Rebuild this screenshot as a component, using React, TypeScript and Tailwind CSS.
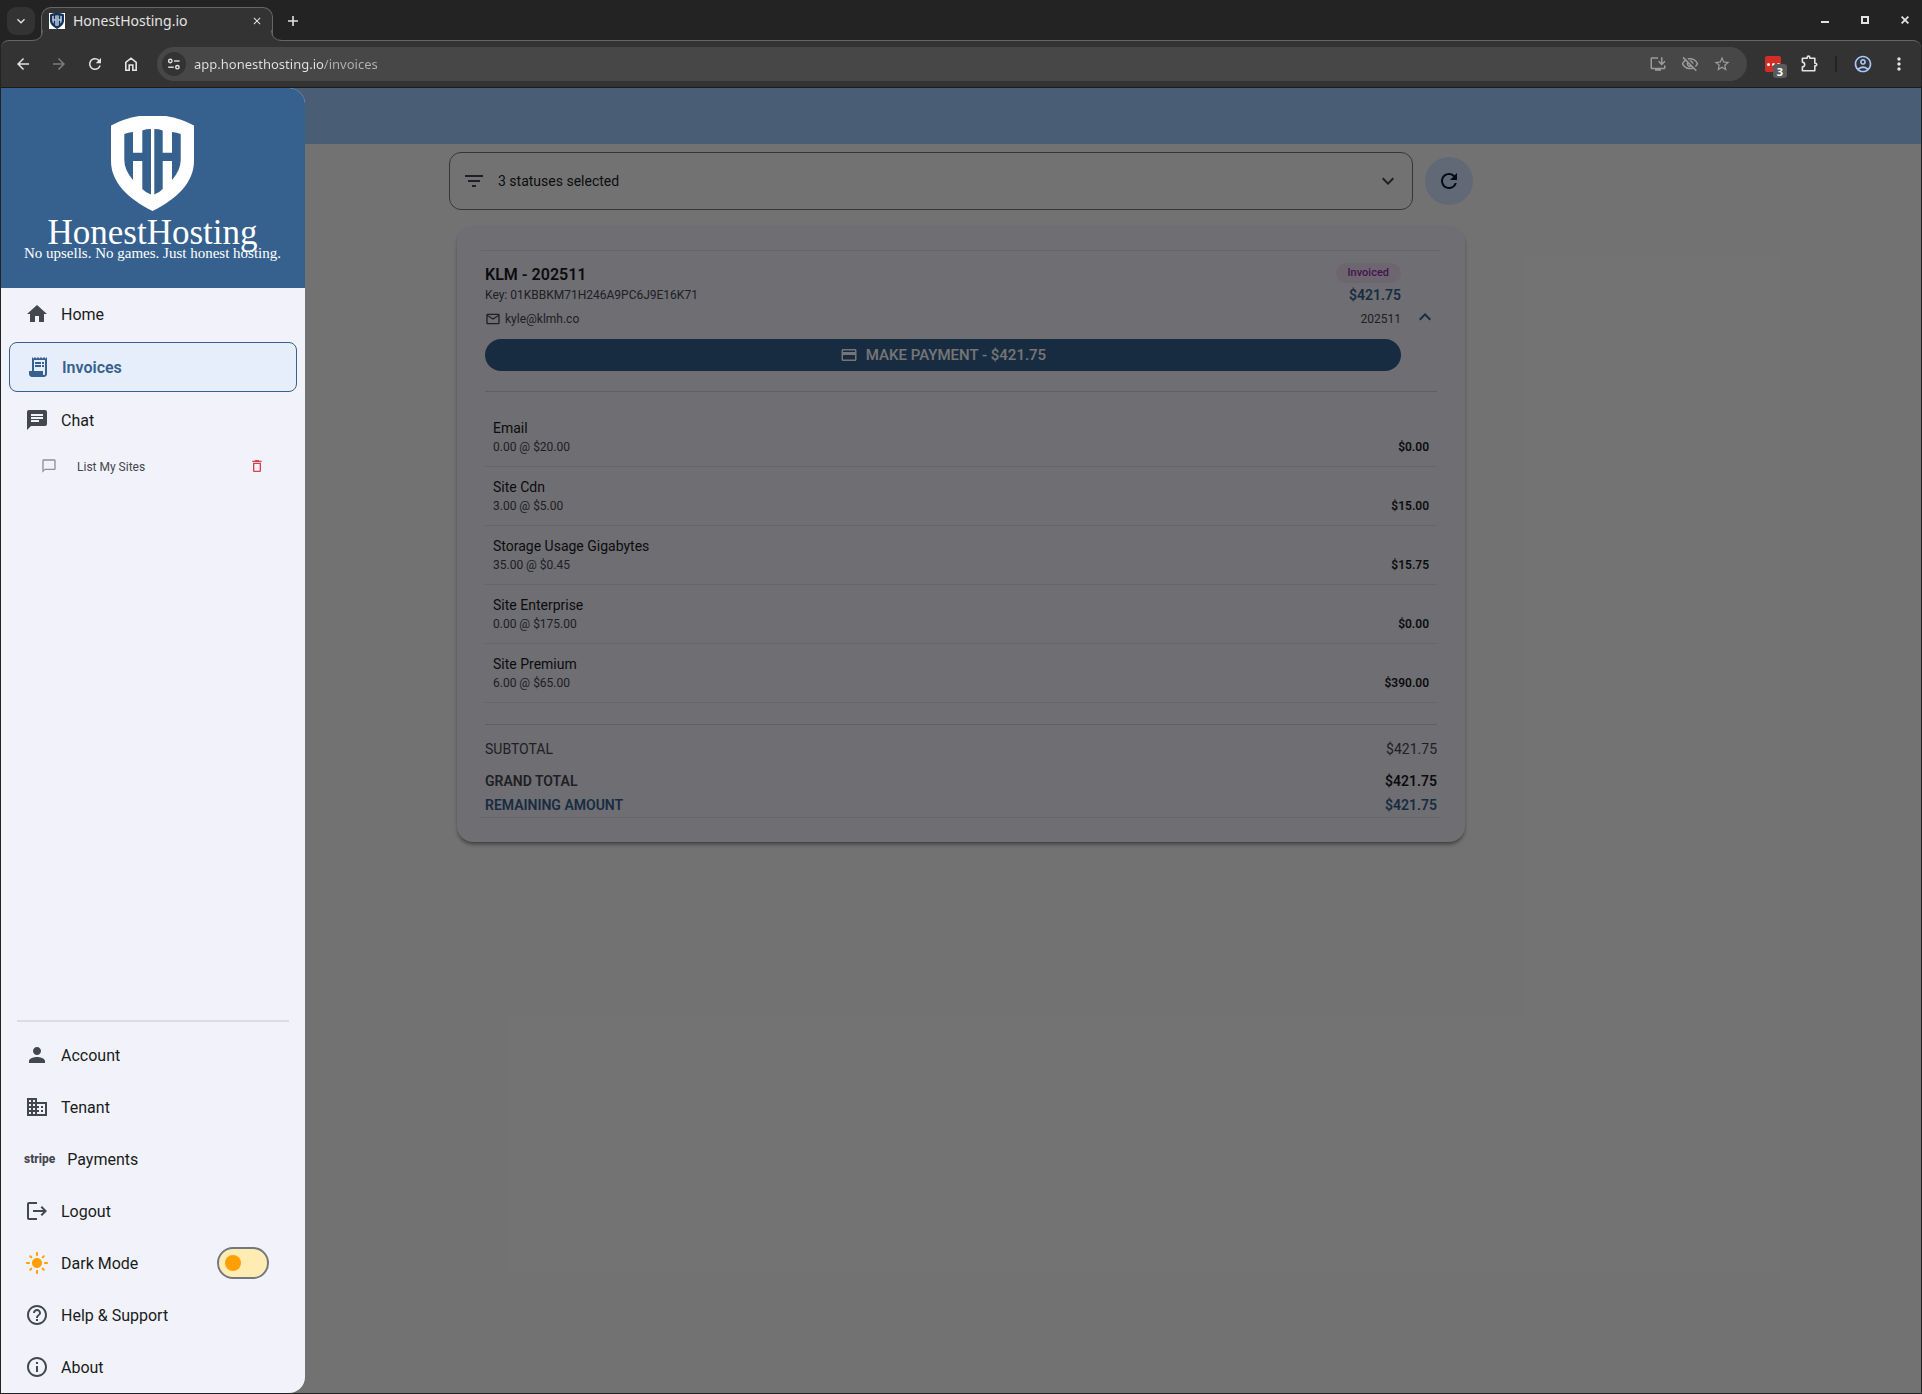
import { useState } from 'react';
import type { ReactNode } from 'react';
import {
  MdArrowBack,
  MdArrowForward,
  MdBusiness,
  MdChat,
  MdChatBubbleOutline,
  MdClose,
  MdCreditCard,
  MdDeleteOutline,
  MdFilterList,
  MdHelpOutline,
  MdHome,
  MdInfoOutline,
  MdKeyboardArrowDown,
  MdKeyboardArrowUp,
  MdLightMode,
  MdLogout,
  MdMailOutline,
  MdMoreVert,
  MdOutlineAccountCircle,
  MdOutlineInstallDesktop,
  MdOutlineVisibilityOff,
  MdPerson,
  MdReceiptLong,
  MdRefresh,
  MdStarBorder,
} from 'react-icons/md';

interface LineItem {
  name: string;
  detail: string;
  amount: string;
}

const lineItems: LineItem[] = [
  { name: 'Email', detail: '0.00 @ $20.00', amount: '$0.00' },
  { name: 'Site Cdn', detail: '3.00 @ $5.00', amount: '$15.00' },
  { name: 'Storage Usage Gigabytes', detail: '35.00 @ $0.45', amount: '$15.75' },
  { name: 'Site Enterprise', detail: '0.00 @ $175.00', amount: '$0.00' },
  { name: 'Site Premium', detail: '6.00 @ $65.00', amount: '$390.00' },
];

function Shield({ className, shield, bars }: { className: string; shield: string; bars: string }) {
  return (
    <svg viewBox="0 0 83 95" className={className} aria-hidden="true">
      <path fill={shield} d="M0 9.5Q13 2.5 28 0H55Q70 2.5 83 9.5V45C83 66 66 83 41.5 95C17 83 0 66 0 45Z" />
      <path
        fill={bars}
        d="M13.3 18Q17 16.3 22 16V36.7H31.3V14.4Q35 13 40 13V78.5Q35 77 31.3 73V45H22V64Q13.3 54 13.3 44Z"
      />
      <path
        fill={bars}
        d="M69.7 18Q66 16.3 61 16V36.7H51.7V14.4Q48 13 43.3 13V78.5Q48 77 51.7 73V45H61V64Q69.7 54 69.7 44Z"
      />
    </svg>
  );
}

function TabStrip() {
  return (
    <div className="flex h-10 bg-[#232323] px-px text-[#e3e3e3]">
      <div className="flex flex-1 pl-1.5 pt-[7px]">
        <button aria-label="Search tabs" className="flex h-7 w-7 items-center justify-center rounded-[9px] bg-[#333333]">
          <MdKeyboardArrowDown className="h-4 w-4" />
        </button>
        <div className="relative z-10 -mb-px ml-1.5 flex w-[232px] items-start rounded-t-[10px] border border-b-0 border-[#666666] bg-[#333333] pl-[7px] pr-[7px] pt-[5px]">
          <svg className="absolute -left-[10px] bottom-0 h-[11px] w-[11px]" viewBox="0 0 11 11" aria-hidden="true">
            <path d="M11 0H10.5Q10.5 10.5 0 10.5V11H11Z" fill="#333333" />
            <path d="M10.5 0Q10.5 10.5 0 10.5" fill="none" stroke="#666666" />
          </svg>
          <svg className="absolute -right-[10px] bottom-0 h-[11px] w-[11px]" viewBox="0 0 11 11" aria-hidden="true">
            <path d="M0 0H.5Q.5 10.5 11 10.5V11H0Z" fill="#333333" />
            <path d="M.5 0Q.5 10.5 11 10.5" fill="none" stroke="#666666" />
          </svg>
          <span className="flex h-4 w-4 items-center justify-center bg-white">
            <Shield className="h-4 w-[14px]" shield="#12335c" bars="#c9d6e6" />
          </span>
          <span className="ml-2 flex-1 font-['Noto_Sans'] text-[14px] leading-4">HonestHosting.io</span>
          <button aria-label="Close tab" className="flex h-4 w-4 items-center justify-center">
            <MdClose className="h-3 w-3" />
          </button>
        </div>
        <button aria-label="New tab" className="ml-1.5 flex h-7 w-7 items-center justify-center">
          <svg viewBox="0 0 12 12" className="h-3 w-3" aria-hidden="true">
            <path d="M6 1v10M1 6h10" stroke="currentColor" strokeWidth="1.6" fill="none" />
          </svg>
        </button>
      </div>
      <div className="flex items-center gap-6 pr-2">
        <button aria-label="Minimize" className="flex h-4 w-4 items-center justify-center pt-1">
          <span className="h-0.5 w-2 bg-[#e3e3e3]" />
        </button>
        <button aria-label="Maximize" className="flex h-4 w-4 items-center justify-center">
          <span className="h-2 w-2 border-2 border-[#e3e3e3]" />
        </button>
        <button aria-label="Close window" className="flex h-4 w-4 items-center justify-center">
          <svg viewBox="0 0 8 8" className="h-2 w-2" aria-hidden="true">
            <path d="M.6.6l6.8 6.8M7.4.6L.6 7.4" stroke="currentColor" strokeWidth="1.8" fill="none" />
          </svg>
        </button>
      </div>
    </div>
  );
}

function Toolbar() {
  const [url, setUrl] = useState('app.honesthosting.io/invoices');

  return (
    <div className="mx-px flex h-12 items-center rounded-t-lg border-b border-t border-b-[#1c1c1c] border-t-[#666666] bg-[#333333] px-3 text-[#e3e3e3]">
      <div className="flex items-center gap-4">
        <button aria-label="Back" className="flex h-5 w-5 items-center justify-center">
          <MdArrowBack className="h-[18px] w-[18px]" />
        </button>
        <button aria-label="Forward" className="flex h-5 w-5 items-center justify-center text-[#7c7c7c]">
          <MdArrowForward className="h-[18px] w-[18px]" />
        </button>
        <button aria-label="Reload" className="flex h-5 w-5 items-center justify-center">
          <MdRefresh className="h-[18px] w-[18px]" />
        </button>
        <button aria-label="Home page" className="flex h-5 w-5 items-center justify-center">
          <svg viewBox="0 0 18 18" className="h-[18px] w-[18px]" fill="none" stroke="currentColor" strokeWidth="1.6" aria-hidden="true">
            <path d="M3.8 15.2V7.4L9 3.2l5.2 4.2v7.8h-3.4V10H7.2v5.2z" />
          </svg>
        </button>
      </div>
      <div className="ml-4 flex h-[34px] flex-1 items-center rounded-full bg-[#474747] pl-[5px] pr-4">
        <button aria-label="Site information" className="flex h-6 w-6 items-center justify-center rounded-full bg-[#333333]">
          <svg viewBox="0 0 14 14" className="h-[14px] w-[14px]" fill="none" stroke="currentColor" strokeWidth="1.4" aria-hidden="true">
            <circle cx="3.3" cy="4" r="1.7" />
            <path d="M7 4h5.6" />
            <circle cx="10.4" cy="10.2" r="1.7" />
            <path d="M1.2 10.2h5.6" />
          </svg>
        </button>
        <input
          aria-label="Address"
          value={url}
          onChange={(e) => setUrl(e.target.value)}
          className="ml-2 flex-1 bg-[linear-gradient(to_right,#e3e3e3_130px,#b2b2b2_130px)] bg-clip-text font-['Noto_Sans'] text-[13px] leading-5 text-transparent caret-white outline-none"
        />
        <div className="flex items-center gap-[14px] text-[#9c9c9c]">
          <button aria-label="Install app">
            <MdOutlineInstallDesktop className="h-[18px] w-[18px]" />
          </button>
          <button aria-label="Tracking protection">
            <MdOutlineVisibilityOff className="h-[18px] w-[18px]" />
          </button>
          <button aria-label="Bookmark this page">
            <MdStarBorder className="h-[18px] w-[18px]" />
          </button>
        </div>
      </div>
      <button aria-label="Password manager" className="relative ml-[18px] h-4 w-4 rounded-[2px] bg-[#d32d27]">
        <span className="flex items-center gap-0.5 pl-0.5">
          <span className="h-[3px] w-[3px] rounded-full bg-white" />
          <span className="h-[3px] w-[3px] rounded-full bg-white" />
          <span className="h-[3px] w-[3px] rounded-full bg-white" />
        </span>
        <span className="absolute left-2 top-2 flex h-[14px] w-[14px] items-center justify-center rounded-[3px] bg-[#5a5a5a] font-['Noto_Sans'] text-[11px] font-bold leading-none text-white">
          3
        </span>
      </button>
      <button aria-label="Extensions" className="ml-[18px]">
        <svg viewBox="0 0 20 20" className="h-5 w-5" fill="none" stroke="currentColor" strokeWidth="1.6" strokeLinejoin="round" aria-hidden="true">
          <path d="M3.4 4.2h4.8V3.4a1.3 1.3 0 0 1 2.6 0v.8h5v5h.6a1.3 1.3 0 0 1 0 2.6h-.6v5H3.4v-3.9a2.3 2.3 0 0 0 0-4.6z" />
        </svg>
      </button>
      <span className="ml-[16px] h-4 w-0.5 bg-[#232323]" />
      <button aria-label="Profile" className="ml-4 text-[#a8c7fa]">
        <MdOutlineAccountCircle className="h-5 w-5" />
      </button>
      <button aria-label="Browser menu" className="ml-4">
        <MdMoreVert className="h-5 w-5" />
      </button>
    </div>
  );
}

function NavItem({ icon, label, children }: { icon: ReactNode; label: string; children?: ReactNode }) {
  return (
    <li className="flex h-[52px] items-center pl-6 pr-9">
      <a href="#" className="flex flex-1 items-center gap-3 text-[16px] leading-6 text-[#191c20]">
        <span className="text-[24px] text-[#43474e]">{icon}</span>
        <span className="pt-0.5">{label}</span>
      </a>
      {children}
    </li>
  );
}

function Drawer() {
  const [darkMode, setDarkMode] = useState(false);

  return (
    <aside className="absolute inset-y-0 left-0 flex w-[304px] flex-col overflow-hidden rounded-r-2xl bg-[#f2f2fb]">
      <div className="flex h-[200px] flex-col items-center bg-[#36618e] pr-px pt-7 font-['Liberation_Serif',serif] text-white">
        <Shield className="h-[95px] w-[83px]" shield="#ffffff" bars="#36618e" />
        <span className="mt-2 text-[35px] leading-7">HonestHosting</span>
        <span className="text-[15px] leading-3">No upsells. No games. Just honest hosting.</span>
      </div>
      <nav className="flex flex-1 flex-col">
        <ul className="flex-1">
          <NavItem icon={<MdHome />} label="Home" />
          <li className="px-2 py-0.5">
            <a
              href="#"
              className="flex h-[50px] items-center gap-3 rounded-lg border border-[#36618e] bg-[#e7eefb] pl-4 text-[16px] font-semibold text-[#36618e]"
            >
              <MdReceiptLong className="h-6 w-6" />
              <span className="pt-0.5">Invoices</span>
            </a>
          </li>
          <NavItem icon={<MdChat />} label="Chat" />
          <li className="flex h-10 items-center pl-10 pr-10">
            <a href="#" className="flex flex-1 items-center gap-5 text-[12px] text-[#43474e]">
              <MdChatBubbleOutline className="h-4 w-4 text-[#8e9199]" />
              <span className="pt-0.5">List My Sites</span>
            </a>
            <button aria-label="Delete chat" className="text-[#d0444a]">
              <MdDeleteOutline className="h-4 w-4" />
            </button>
          </li>
        </ul>
        <div className="mx-4 mb-[7px] h-0.5 bg-[#dcdce5]" />
        <ul>
          <NavItem icon={<MdPerson />} label="Account" />
          <NavItem icon={<MdBusiness />} label="Tenant" />
          <NavItem
            icon={<span className="-ml-px block text-[12px] font-extrabold leading-6">stripe</span>}
            label="Payments"
          />
          <NavItem icon={<MdLogout />} label="Logout" />
          <NavItem icon={<MdLightMode className="text-[#ffa000]" />} label="Dark Mode">
            <input
              type="checkbox"
              role="switch"
              aria-label="Dark Mode"
              checked={darkMode}
              onChange={(e) => setDarkMode(e.target.checked)}
              className="flex h-8 w-[52px] appearance-none items-center rounded-full border-2 border-[#73777f] bg-[#ffecb3] px-1.5 before:block before:h-4 before:w-4 before:rounded-full before:bg-[#ffa000] checked:justify-end"
            />
          </NavItem>
          <NavItem icon={<MdHelpOutline />} label="Help & Support" />
          <NavItem icon={<MdInfoOutline />} label="About" />
        </ul>
      </nav>
    </aside>
  );
}

function InvoiceCard() {
  return (
    <article className="mx-2 mt-4 rounded-2xl bg-[#f1effa] px-6 py-6 shadow-[0_3px_4px_-1px_rgba(0,0,0,0.5)]">
      <div className="border-y border-[#dddce4] px-1 pt-3">
        <div className="flex items-center gap-3">
          <div className="flex-1">
            <div className="flex justify-between">
              <div>
                <h2 className="text-[16px] font-semibold leading-6 text-[#191c20]">KLM - 202511</h2>
                <p className="text-[12px] leading-4 text-[#43474e]">Key: 01KBBKM71H246A9PC6J9E16K71</p>
                <p className="mt-2 flex items-center gap-1 text-[12px] leading-4 text-[#43474e]">
                  <MdMailOutline className="h-4 w-4" />
                  kyle@klmh.co
                </p>
              </div>
              <div className="flex flex-col items-end">
                <span className="rounded-full bg-[#ecdff0] px-3 text-[11px] font-medium leading-5 text-[#9c27b0]">
                  Invoiced
                </span>
                <span className="text-[14px] font-semibold leading-6 text-[#36618e]">$421.75</span>
                <span className="text-[12px] leading-6 text-[#43474e]">202511</span>
              </div>
            </div>
            <button className="mt-2 flex h-8 w-full items-center justify-center gap-2 rounded-full bg-[#36618e] text-[15px] font-medium text-white">
              <MdCreditCard className="h-[18px] w-[18px]" />
              MAKE PAYMENT - $421.75
            </button>
          </div>
          <button aria-label="Collapse invoice" className="text-[#36618e]">
            <MdKeyboardArrowUp className="h-6 w-6" />
          </button>
        </div>
        <ul className="mt-5 border-t border-[#cfd0d8] pt-4">
          {lineItems.map((item) => (
            <li key={item.name} className="flex items-end justify-between border-b border-[#dddce4] px-2 py-2.5">
              <div>
                <p className="text-[14px] leading-5 text-[#191c20]">{item.name}</p>
                <p className="text-[12px] leading-[18px] text-[#43474e]">{item.detail}</p>
              </div>
              <span className="text-[12px] font-semibold leading-[18px] text-[#191c20]">{item.amount}</span>
            </li>
          ))}
        </ul>
        <dl className="mt-[21px] border-t border-[#cfd0d8] pt-3 text-[14px] leading-6">
          <div className="flex justify-between text-[#43474e]">
            <dt>SUBTOTAL</dt>
            <dd>$421.75</dd>
          </div>
          <div className="mt-2 flex justify-between font-semibold">
            <dt className="text-[#43474e]">GRAND TOTAL</dt>
            <dd className="text-[#191c20]">$421.75</dd>
          </div>
          <div className="flex justify-between font-semibold text-[#36618e]">
            <dt>REMAINING AMOUNT</dt>
            <dd>$421.75</dd>
          </div>
        </dl>
      </div>
    </article>
  );
}

export default function App() {
  return (
    <div className="flex min-h-screen flex-col bg-[#232323] font-[Roboto,sans-serif]">
      <TabStrip />
      <Toolbar />
      <div className="relative mx-px mb-px flex flex-1 flex-col bg-[#f9f9fb]">
        <header className="h-14 bg-[#a0cafd]" />
        <main className="mx-auto w-full max-w-5xl pt-2">
          <div className="flex items-center gap-3">
            <label className="flex h-[58px] flex-1 items-center rounded-xl border border-[#73777f] pl-3 pr-3 text-[#43474e]">
              <MdFilterList className="h-6 w-6" />
              <select
                aria-label="Invoice statuses"
                className="ml-3 flex-1 appearance-none bg-transparent text-[14px] text-[#191c20] outline-none"
              >
                <option>3 statuses selected</option>
              </select>
              <MdKeyboardArrowDown className="h-6 w-6" />
            </label>
            <button
              aria-label="Refresh invoices"
              className="flex h-12 w-12 items-center justify-center rounded-full bg-[#d1e4ff] text-[#001d36]"
            >
              <MdRefresh className="h-6 w-6" />
            </button>
          </div>
          <InvoiceCard />
        </main>
        <div className="absolute inset-0 bg-black/54" />
        <Drawer />
      </div>
    </div>
  );
}
